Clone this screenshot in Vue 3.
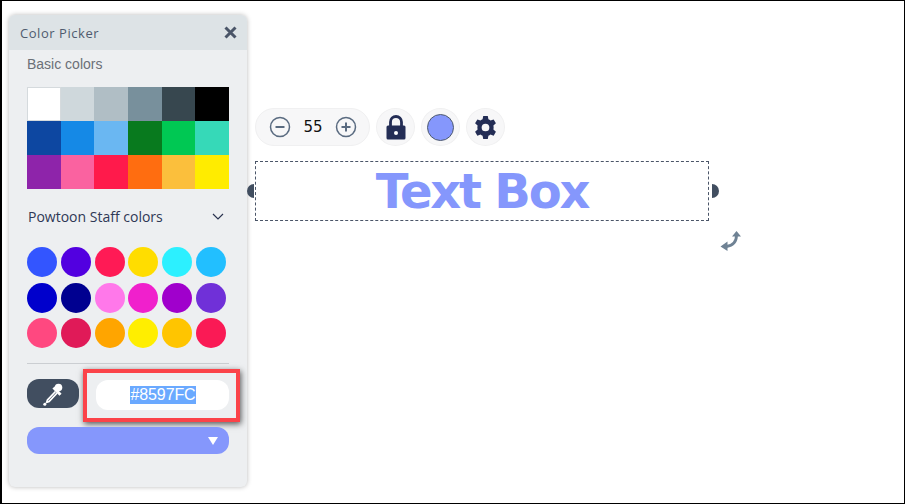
<script setup>
const basicColors = [
  '#ffffff', '#cfd8dc', '#b0bec5', '#78909c', '#37474f', '#000000',
  '#0d47a1', '#1589e6', '#6ab7f2', '#087a1e', '#00c853', '#36d9b8',
  '#8e24aa', '#fa62a0', '#ff1a4b', '#ff6d10', '#fbbf3c', '#ffec00',
]
const staffColors = [
  '#3355ff', '#5200e0', '#ff1a55', '#ffdd00', '#2cf0ff', '#22bfff',
  '#0000cc', '#000090', '#ff78ea', '#f020cc', '#a000cc', '#7030d8',
  '#ff4880', '#e01a58', '#ffa500', '#ffee00', '#ffc500', '#fa1a55',
]
</script>

<template>
  <div class="stage">
    <div class="panel">
      <div class="panel-head">
        <span class="panel-title">Color Picker</span>
        <svg class="close" width="13" height="13" viewBox="0 0 13 13">
          <path d="M1.500 1.500l10 10M11.500 1.500l-10 10" stroke="#4a5568" stroke-width="3" fill="none" />
        </svg>
      </div>
      <div class="panel-body">
        <div class="basic-label">Basic colors</div>
        <div class="basic-grid">
          <div v-for="(c, i) in basicColors" :key="i" class="swatch" :class="{ first: i === 0 }" :style="{ background: c }"></div>
        </div>
        <div class="staff-row">
          <span>Powtoon Staff colors</span>
          <svg width="12" height="7" viewBox="0 0 12 7">
            <path d="M1 1l5 5 5-5" stroke="#2a3350" stroke-width="1.200" fill="none" />
          </svg>
        </div>
        <div class="staff-grid">
          <div v-for="(c, i) in staffColors" :key="i" class="dot" :style="{ background: c }"></div>
        </div>
        <div class="divider"></div>
        <div class="hex-row">
          <button class="dropper" type="button">
            <svg width="20" height="24" viewBox="0 0 20 24">
              <circle cx="15.500" cy="5.500" r="3.800" fill="#fff" />
              <path d="M10.500 5.500l7 7.200" stroke="#fff" stroke-width="3" fill="none" />
              <path d="M12.500 9.500l-8 8.500-.8 2.300 2.400-.8 8-8.500" stroke="#fff" stroke-width="1.800" fill="none" />
              <circle cx="1.800" cy="22.300" r="1.500" fill="#fff" />
            </svg>
          </button>
          <div class="hex-box">
            <span class="hex-text">#8597FC</span>
          </div>
        </div>
        <div class="color-bar">
          <span class="bar-arrow"></span>
        </div>
      </div>
    </div>

    <div class="toolbar">
      <div class="pill">
        <svg width="22" height="22" viewBox="0 0 22 22">
          <circle cx="11" cy="11" r="9.500" fill="none" stroke="#5a6b80" stroke-width="1.500" />
          <path d="M6.500 11h9" stroke="#5a6b80" stroke-width="2" />
        </svg>
        <span class="size">55</span>
        <svg width="22" height="22" viewBox="0 0 22 22">
          <circle cx="11" cy="11" r="9.500" fill="none" stroke="#5a6b80" stroke-width="1.500" />
          <path d="M6.500 11h9M11 6.500v9" stroke="#5a6b80" stroke-width="2" />
        </svg>
      </div>
      <div class="round">
        <svg width="20" height="25" viewBox="0 0 20 25">
          <path d="M4.500 11V7a5.500 5.500 0 0 1 11 0v4" fill="none" stroke="#232d55" stroke-width="2.800" />
          <path d="M2 10.500h16a1.500 1.500 0 0 1 1.500 1.500v11a1.500 1.500 0 0 1-1.500 1.500H2A1.500 1.500 0 0 1 .5 23V12A1.500 1.500 0 0 1 2 10.500z" fill="#232d55" />
          <circle cx="10" cy="18" r="2" fill="#fff" />
        </svg>
      </div>
      <div class="round">
        <div class="current"></div>
      </div>
      <div class="round">
        <svg width="25" height="25" viewBox="0 0 24 24">
          <path fill="#232d55" fill-rule="evenodd" d="M14.200 1h-4.400l-.6 3.100a8.300 8.300 0 0 0-2 1.200L4.200 4.200 2 8l2.400 2.100a8.300 8.300 0 0 0 0 3.800L2 16l2.200 3.800 3-1.100a8.300 8.300 0 0 0 2 1.200l.6 3.100h4.400l.6-3.100a8.300 8.300 0 0 0 2-1.200l3 1.100L22 16l-2.400-2.100a8.300 8.300 0 0 0 0-3.800L22 8l-2.200-3.800-3 1.100a8.300 8.300 0 0 0-2-1.200zM12 8.300a3.700 3.700 0 1 1 0 7.400 3.700 3.700 0 0 1 0-7.400z" />
        </svg>
      </div>
    </div>

    <div class="text-box">
      <span class="handle left"></span>
      <span class="box-text">Text Box</span>
      <span class="handle right"></span>
    </div>

    <svg class="rotate" width="24" height="24" viewBox="0 0 24 24">
      <path d="M17.500 6c0 7-3 10.500-10 11.500" fill="none" stroke="#6f8294" stroke-width="2.800" />
      <path d="M13 7.500l4.500-5.500 4.500 5.500zM8.500 12.500l-7 5 7 4.500z" fill="#6f8294" />
    </svg>
  </div>
</template>

<style scoped>
.stage {
  position: relative;
  width: 905px;
  height: 504px;
  box-sizing: border-box;
  background: #fff;
  border: 1px solid #000;
  border-left-width: 2px;
  overflow: hidden;
  font-family: "Open Sans", "Liberation Sans", sans-serif;
}
.panel {
  position: absolute;
  left: 7px;
  top: 14px;
  width: 238px;
  height: 472px;
  background: #edeff1;
  border-radius: 6px;
  box-shadow: 0 0 5px rgba(0, 0, 0, 0.28);
  overflow: hidden;
}
.panel-head {
  height: 35px;
  background: #dde3e6;
  display: flex;
  align-items: center;
  justify-content: space-between;
  padding: 0 10px 0 11px;
}
.panel-title {
  font-size: 13px;
  font-weight: 500;
  color: #4f5b6e;
  letter-spacing: 0.55px;
}
.panel-body {
  padding: 0 18px;
}
.basic-label {
  font-family: "Liberation Sans", sans-serif;
  font-size: 14px;
  line-height: 16px;
  padding-top: 6px;
  color: #6b7077;
}
.basic-grid {
  display: grid;
  grid-template-columns: repeat(6, 1fr);
  grid-auto-rows: 34px;
  margin-top: 15px;
  width: 202px;
}
.swatch.first {
  border: 1px solid #d5dadd;
  box-sizing: border-box;
}
.staff-row {
  display: flex;
  align-items: center;
  justify-content: space-between;
  height: 20px;
  margin-top: 17px;
  padding: 0 5px 0 1px;
  font-family: "Open Sans", sans-serif;
  font-size: 14px;
  color: #2f3855;
}
.staff-grid {
  display: grid;
  grid-template-columns: repeat(6, 30px);
  grid-auto-rows: 30px;
  column-gap: 3.800px;
  row-gap: 5.500px;
  margin-top: 21px;
}
.dot {
  border-radius: 50%;
}
.divider {
  height: 1px;
  background: #cbced2;
  width: 202px;
  margin-top: 15px;
}
.hex-row {
  position: relative;
  height: 50px;
  margin-top: 15px;
}
.dropper {
  display: flex;
  align-items: center;
  justify-content: center;
  width: 52px;
  height: 29px;
  padding: 0;
  border: none;
  border-radius: 12px;
  background: #414e60;
}
.hex-box {
  position: absolute;
  left: 56px;
  top: -10px;
  width: 157px;
  height: 53px;
  box-sizing: border-box;
  border: 4px solid #fb4349;
  box-shadow: 1px 2px 6px rgba(0, 0, 0, 0.65);
  display: flex;
  align-items: center;
  padding-left: 9px;
}
.hex-box::before {
  content: "";
  position: absolute;
  left: 9px;
  top: 7px;
  width: 133px;
  height: 30px;
  border-radius: 12px;
  background: #fff;
}
.hex-text {
  position: relative;
  margin: 0 auto;
  left: -3px;
  top: -1px;
  font-family: "Liberation Sans", sans-serif;
  font-size: 16px;
  line-height: 18px;
  letter-spacing: -0.1px;
  color: #fff;
  background: #6aa9ff;
}
.color-bar {
  width: 202px;
  height: 27px;
  margin-top: -2px;
  border-radius: 12px;
  background: #8597fc;
  position: relative;
}
.bar-arrow {
  position: absolute;
  right: 11px;
  top: 10px;
  border-left: 5px solid transparent;
  border-right: 5px solid transparent;
  border-top: 8px solid #fff;
}
.toolbar {
  position: absolute;
  left: 253px;
  top: 107px;
  display: flex;
  gap: 6px;
}
.pill {
  width: 115px;
  height: 38px;
  box-sizing: border-box;
  border-radius: 19px;
  background: #f7f7f8;
  border: 1px solid #f0f0f1;
  display: flex;
  align-items: center;
  justify-content: space-between;
  padding: 0 12px 0 13px;
}
.size {
  font-family: "DejaVu Sans", sans-serif;
  font-size: 15px;
  color: #111;
}
.round {
  width: 39px;
  height: 38px;
  box-sizing: border-box;
  border-radius: 50%;
  background: #f7f7f8;
  border: 1px solid #f0f0f1;
  display: flex;
  align-items: center;
  justify-content: center;
}
.current {
  width: 27px;
  height: 27px;
  box-sizing: border-box;
  border-radius: 50%;
  background: #8597fc;
  border: 1px solid #4f5b6e;
}
.text-box {
  position: absolute;
  left: 253px;
  top: 160px;
  width: 454px;
  height: 60px;
  box-sizing: border-box;
  border: 1px dashed #4a5568;
  display: flex;
  align-items: center;
  justify-content: center;
}
.box-text {
  font-family: "DejaVu Sans", sans-serif;
  font-weight: 700;
  font-size: 48px;
  line-height: 60px;
  letter-spacing: -2.200px;
  color: #8597fc;
}
.handle {
  position: absolute;
  top: 22px;
  width: 7px;
  height: 14px;
  background: #414e60;
}
.handle.left {
  left: -9px;
  border-radius: 7px 0 0 7px;
}
.handle.right {
  right: -11px;
  border-radius: 0 7px 7px 0;
}
.rotate {
  position: absolute;
  left: 717px;
  top: 228px;
}
</style>

<style>
html, body {
  margin: 0;
  background: #fff;
}
</style>
